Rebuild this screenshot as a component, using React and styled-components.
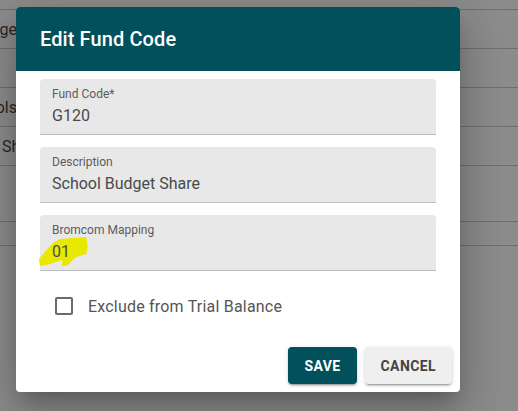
import React from "react";
import styled, { createGlobalStyle } from "styled-components";

const GlobalStyle = createGlobalStyle`
  html, body {
    margin: 0;
    padding: 0;
    width: 518px;
    height: 411px;
    overflow: hidden;
    font-family: Roboto, "Liberation Sans", Arial, sans-serif;
  }
`;

const Page = styled.div`
  position: relative;
  width: 518px;
  height: 411px;
  background: #ffffff;
  overflow: hidden;
`;

const Table = styled.div`
  display: flex;
  flex-direction: column;
  padding-top: 9px;
`;

const Row = styled.div`
  display: flex;
  align-items: center;
  height: ${(props) => props.h}px;
  border-top: 1px solid #c9c9c9;
  box-sizing: border-box;
  font-size: 16px;
  color: #4a4a4a;
`;

const Cell = styled.div`
  width: 17px;
  overflow: hidden;
  white-space: nowrap;
  display: flex;
  justify-content: ${(props) => (props.end ? "flex-end" : "flex-start")};
  padding-left: ${(props) => (props.end ? 0 : 2)}px;
`;

const Backdrop = styled.div`
  position: absolute;
  inset: 0;
  background: rgba(0, 0, 0, 0.45);
`;

const Dialog = styled.div`
  position: absolute;
  left: 16px;
  top: 7px;
  width: 444px;
  background: #fff;
  border-radius: 4px;
  overflow: hidden;
  box-shadow: 0 11px 15px -7px rgba(0, 0, 0, 0.2),
    0 24px 38px 3px rgba(0, 0, 0, 0.14), 0 9px 46px 8px rgba(0, 0, 0, 0.12);
  display: flex;
  flex-direction: column;
`;

const Header = styled.div`
  background: #02505b;
  color: #fff;
  height: 64px;
  padding: 0 24px;
  display: flex;
  align-items: center;
  font-size: 20px;
  font-weight: 500;
  letter-spacing: 0.1px;
`;

const Content = styled.div`
  padding: 0 24px 12px;
  display: flex;
  flex-direction: column;
`;

const Field = styled.div`
  position: relative;
  margin: 8px 0 4px;
  height: 56px;
  box-sizing: border-box;
  background: #e8e8e8;
  border-radius: 4px 4px 0 0;
  border-bottom: 1px solid #bdbdbd;
  padding: 7px 12px 0;
  display: flex;
  flex-direction: column;
`;

const Label = styled.span`
  font-size: 12px;
  line-height: 16px;
  color: #5c5c5c;
`;

const Value = styled.span`
  position: relative;
  z-index: 1;
  margin-top: 2px;
  font-size: 16px;
  line-height: 23px;
  color: #4a4a4a;
`;

const Highlight = styled.svg`
  position: absolute;
  z-index: 0;
  left: -2px;
  top: 20px;
  pointer-events: none;
`;

const CheckRow = styled.label`
  display: flex;
  align-items: center;
  height: 42px;
  margin-top: 10px;
  padding-left: 15px;
  gap: 15px;
  font-size: 16px;
  letter-spacing: 0.2px;
  color: #555;
`;

const Box = styled.span`
  width: 18px;
  height: 18px;
  box-sizing: border-box;
  border: 2px solid #6b6b6b;
  border-radius: 2px;
`;

const Actions = styled.div`
  display: flex;
  justify-content: flex-end;
  gap: 8px;
  padding: 8px;
`;

const Button = styled.button`
  height: 37px;
  padding: 0 16px;
  min-width: 64px;
  border: none;
  border-radius: 4px;
  font-family: Roboto, "Liberation Sans", Arial, sans-serif;
  font-size: 14px;
  font-weight: 700;
  letter-spacing: 0.4px;
  text-transform: uppercase;
  background: ${(props) => (props.primary ? "#02505b" : "#efefef")};
  color: ${(props) => (props.primary ? "#fff" : "#444")};
  box-shadow: 0 3px 1px -2px rgba(0, 0, 0, 0.2), 0 2px 2px 0 rgba(0, 0, 0, 0.14),
    0 1px 5px 0 rgba(0, 0, 0, 0.12);
`;

const rows = [
  { h: 39, text: "Page", end: true },
  { h: 39, text: "" },
  { h: 39, text: "Schools", end: true },
  { h: 39, text: "Share" },
  { h: 56, text: "" },
  { h: 24, text: "" },
  { h: 170, text: "" },
];

export default function App() {
  return (
    <>
      <GlobalStyle />
      <Page>
        <Table>
          {rows.map((r, i) => (
            <Row key={i} h={r.h}>
              <Cell end={r.end}>{r.text}</Cell>
            </Row>
          ))}
        </Table>
        <Backdrop />
        <Dialog>
          <Header>Edit Fund Code</Header>
          <Content>
            <Field>
              <Label>Fund Code*</Label>
              <Value>G120</Value>
            </Field>
            <Field>
              <Label>Description</Label>
              <Value>School Budget Share</Value>
            </Field>
            <Field>
              <Label>Bromcom Mapping</Label>
              <Value>01</Value>
              <Highlight width="52" height="34" viewBox="0 0 52 34">
                <path
                  d="M1,24 C7,17 14,7 22,4 L48,2 C50,9 50,15 48,19 L38,22 C34,25 32,29 28,31 L24,31 L24,25 C17,27 8,31 2,31 Z"
                  fill="#e8e800"
                />
              </Highlight>
            </Field>
            <CheckRow>
              <Box />
              Exclude from Trial Balance
            </CheckRow>
          </Content>
          <Actions>
            <Button primary>Save</Button>
            <Button>Cancel</Button>
          </Actions>
        </Dialog>
      </Page>
    </>
  );
}
